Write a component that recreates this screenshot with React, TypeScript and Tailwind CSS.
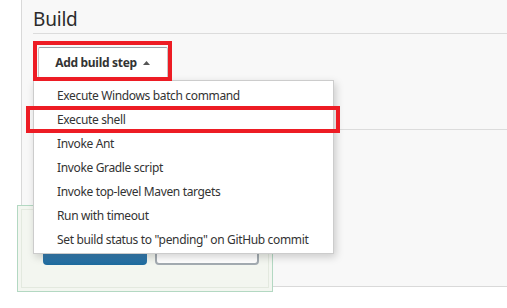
import React from "react";

const items = [
  "Execute Windows batch command",
  "Execute shell",
  "Invoke Ant",
  "Invoke Gradle script",
  "Invoke top-level Maven targets",
  "Run with timeout",
  'Set build status to "pending" on GitHub commit',
];

export default function App() {
  return (
    <div
      className="relative w-[507px] h-[308px] overflow-hidden bg-white text-[#333]"
      style={{ fontFamily: '"Noto Sans", "Open Sans", sans-serif' }}
    >
      <div className="flex h-[287px]">
        <div className="w-[21px] shrink-0 bg-white" />
        <div className="flex-1 bg-[#f8f8f8] border-l border-b border-[#d9d9d9] pl-[11px]">
          <div className="h-[34px] border-b border-[#dcdcdc] flex items-end">
            <h2 className="text-[19px] leading-[19px] pb-[4px] font-normal tracking-[-0.2px] text-[#2b2b2b]">Build</h2>
          </div>
          <div className="h-[96px] border-b border-[#dcdcdc] pt-[13px] pl-[5px]">
            <button className="h-[31px] w-[130px] bg-white border border-[#c8c8c8] border-t-[#9aa3aa] rounded-[2px] flex items-center justify-center gap-[6px] text-[12px] tracking-[-0.3px] font-bold text-[#333] pr-[1px]">
              <span>Add build step</span>
              <svg width="7" height="4" viewBox="0 0 7 4">
                <path d="M0 4 L3.5 0 L7 4 Z" fill="#555" />
              </svg>
            </button>
          </div>
        </div>
      </div>

      {/* Sticky bottom bar */}
      <div className="absolute left-[17px] top-[205px] w-[256px] h-[87px] border border-[#b3d8c2] bg-[#f3f6f0] p-[3px]">
        <div className="h-full border border-[#e3e9df] flex items-end gap-[8px] pl-[21px] pb-[22px]">
          <div className="w-[104px] h-[30px] rounded-[4px] bg-gradient-to-b from-[#5fa0d0] to-[#1d6a9e]" />
          <div className="w-[104px] h-[30px] rounded-[4px] bg-white border-2 border-t border-[#a3abb1]" />
        </div>
      </div>

      {/* Dropdown menu */}
      <div className="absolute left-[33px] top-[80px] w-[301px] h-[174px] bg-white border border-[#cccccc] shadow-[2px_3px_8px_rgba(0,0,0,0.18)] pt-[3px]">
        {items.map((t) => (
          <div key={t} className="h-[24px] flex items-center pl-[23px] text-[12px] tracking-[-0.35px] text-[#333] whitespace-nowrap">
            {t}
          </div>
        ))}
      </div>

      {/* Red annotation boxes */}
      <div className="absolute left-[33px] top-[41px] w-[139px] h-[40px] border-4 border-[#ed1c24]" />
      <div className="absolute left-[26px] top-[106px] w-[314px] h-[27px] border-4 border-[#ed1c24]" />
    </div>
  );
}
